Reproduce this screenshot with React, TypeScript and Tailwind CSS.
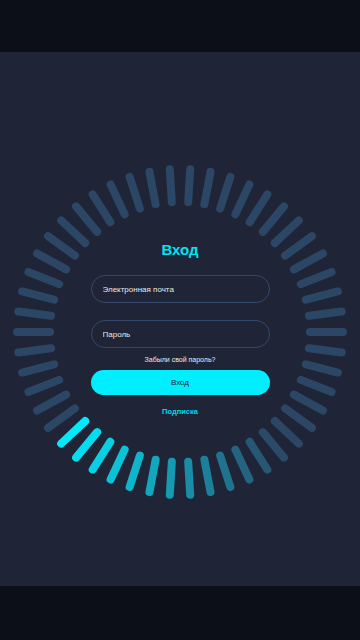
import React from 'react'

const BAR_COUNT = 50
const DIM = [44, 71, 102]
const BRIGHT = [0, 238, 255]
const HEAD = 44

function barColor(i: number) {
  // trail of the blink animation, frozen at the moment of the screenshot
  const d = HEAD - i
  if (d < 0 || d > 12) return `rgb(${DIM.join(',')})`
  const f = Math.min((d + 0.3) / 12.5, 1)
  const c = BRIGHT.map((b, k) => Math.round(b + (DIM[k] - b) * f))
  return `rgb(${c.join(',')})`
}

function Ring() {
  const c = 170
  return (
    <svg viewBox="0 0 340 340" className="absolute inset-0 h-full w-full">
      {Array.from({ length: BAR_COUNT }, (_, i) => (
        <rect
          key={i}
          x={c - 167}
          y={c - 4}
          width={41}
          height={8}
          rx={4}
          fill={barColor(i)}
          transform={`rotate(${i * (360 / BAR_COUNT)} ${c} ${c})`}
        />
      ))}
    </svg>
  )
}

export default function App() {
  return (
    <div className="flex h-[640px] w-[360px] flex-col bg-[#0c0f17] font-['Liberation_Sans',Arial,sans-serif]">
      <div className="h-[52px] shrink-0" />
      <main className="flex h-[534px] shrink-0 flex-col items-center bg-[#1f2536] pt-[110px]">
        <div className="relative flex h-[340px] w-[340px] items-center justify-center">
          <Ring />
          <form className="relative flex w-[179px] flex-col items-center pb-[6px]">
            <h2 className="text-[15px] leading-[18px] font-bold text-[#00e5f5]">Вход</h2>
            <input
              type="email"
              placeholder="Электронная почта"
              className="mt-[16px] h-[28px] w-full rounded-full border border-[#34496b] bg-transparent px-[11px] text-[8px] text-[#e8e8e8] outline-none placeholder:text-[#e8e8e8]"
            />
            <input
              type="password"
              placeholder="Пароль"
              className="mt-[17px] h-[28px] w-full rounded-full border border-[#34496b] bg-transparent px-[11px] text-[8px] text-[#e8e8e8] outline-none placeholder:text-[#e8e8e8]"
            />
            <a className="mt-[7px] text-[7px] leading-[9px] text-[#ececec]">Забыли свой пароль?</a>
            <button
              type="button"
              className="mt-[6px] h-[25px] w-full rounded-full bg-[#00eeff] text-[8px] text-[#1f2536]"
            >
              Вход
            </button>
            <a className="mt-[12px] text-[7.5px] leading-[10px] font-bold text-[#00d8ea]">Подписка</a>
          </form>
        </div>
      </main>
      <div className="flex-1" />
    </div>
  )
}
